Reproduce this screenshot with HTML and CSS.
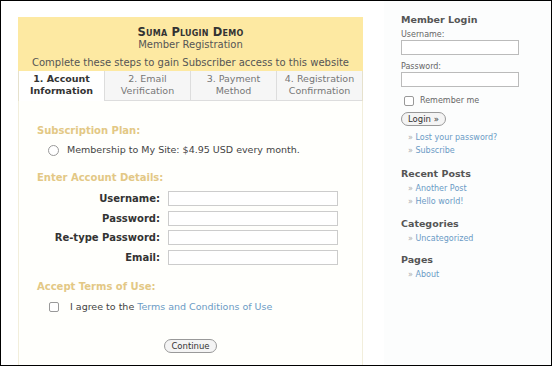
FILE: index.html
```html
<!DOCTYPE html>
<html lang="en">
<head>
<meta charset="UTF-8">
<title>Suma Plugin Demo - Member Registration</title>
<link rel="stylesheet" href="styles.css">
</head>
<body>
<div class="page">

<!-- Registration form -->
<div class="main">
    <div class="reg-header">
        <div class="reg-title">Suma Plugin Demo</div>
        <div class="reg-sub">Member Registration</div>
        <div class="reg-intro">Complete these steps to gain Subscriber access to this website</div>
    </div>

    <div class="steps">
        <div class="step active">1. Account<br>Information</div>
        <div class="step">2. Email<br>Verification</div>
        <div class="step">3. Payment<br>Method</div>
        <div class="step">4. Registration<br>Confirmation</div>
    </div>

    <form class="reg-body">
        <h3>Subscription Plan:</h3>
        <label class="option">
            <span class="radio"></span>
            Membership to My Site: $4.95 USD every month.
        </label>

        <h3>Enter Account Details:</h3>
        <div class="fields">
            <label for="user">Username:</label>
            <input type="text" id="user">
            <label for="pass">Password:</label>
            <input type="password" id="pass">
            <label for="pass2">Re-type Password:</label>
            <input type="password" id="pass2">
            <label for="email">Email:</label>
            <input type="text" id="email">
        </div>

        <h3>Accept Terms of Use:</h3>
        <label class="option agree">
            <span class="check"></span>
            I agree to the <a href="#">Terms and Conditions of Use</a>
        </label>

        <div class="actions">
            <button type="button" class="pill">Continue</button>
        </div>
    </form>
</div>

<!-- Sidebar widgets -->
<div class="sidebar">
    <h4 class="login-title">Member Login</h4>
    <label class="small">Username:</label>
    <input type="text" class="side-input">
    <label class="small">Password:</label>
    <input type="password" class="side-input">
    <label class="remember"><span class="check"></span>Remember me</label>
    <button type="button" class="pill login">Login &raquo;</button>
    <ul class="login-links">
        <li><a href="#">Lost your password?</a></li>
        <li><a href="#">Subscribe</a></li>
    </ul>

    <h4>Recent Posts</h4>
    <ul>
        <li><a href="#">Another Post</a></li>
        <li><a href="#">Hello world!</a></li>
    </ul>

    <h4>Categories</h4>
    <ul>
        <li><a href="#">Uncategorized</a></li>
    </ul>

    <h4>Pages</h4>
    <ul>
        <li><a href="#">About</a></li>
    </ul>
</div>

</div>
</body>
</html>
```

FILE: styles.css
```css
body {
    margin: 0;
    font-family: "DejaVu Sans", Verdana, sans-serif;
    color: #444;
    background: #fff;
}
.page {
    width: 552px;
    height: 366px;
    box-sizing: border-box;
    border: 1px solid #000;
    display: flex;
    overflow: hidden;
}

/* main column */
.main {
    width: 345px;
    margin: 16px 0 0 17px;
    display: flex;
    flex-direction: column;
}
.reg-header {
    background: #fde9a2;
    text-align: center;
    padding: 8px 0 1px;
    color: #333;
}
.reg-title {
    font-size: 11.5px;
    font-weight: bold;
    font-variant: small-caps;
    letter-spacing: 0.2px;
    line-height: 14px;
}
.reg-sub {
    font-size: 10px;
    line-height: 12px;
    color: #555;
}
.reg-intro {
    font-size: 10px;
    line-height: 14px;
    margin-top: 5px;
    color: #555;
}
.steps {
    display: flex;
    border-left: 1px solid #e6e1cc;
    border-right: 1px solid #e6e1cc;
}
.step {
    flex: 1;
    text-align: center;
    font-size: 9.5px;
    line-height: 12px;
    padding: 2px 0 3px;
    background: #f6f6f6;
    color: #777;
    border-bottom: 1px solid #ddd;
    border-left: 1px solid #ddd;
}
.step:first-child {
    border-left: 0;
}
.step.active {
    background: #fff;
    color: #333;
    font-weight: bold;
    border-bottom-color: #fff;
}
.reg-body {
    flex: 1;
    margin: 0;
    padding: 23px 0 0 18px;
    background: #fffffc;
    border-left: 1px solid #f2eedc;
    border-right: 1px solid #f2eedc;
    font-size: 9.5px;
}
.reg-body h3 {
    margin: 0;
    font-size: 10px;
    line-height: 14px;
    color: #e3c885;
}
.option {
    display: flex;
    align-items: center;
    margin: 6px 0 15px 11px;
    color: #444;
    line-height: 12px;
}
.radio {
    width: 9px;
    height: 9px;
    border: 1px solid #999;
    border-radius: 50%;
    margin-right: 8px;
    background: #fff;
}
.check {
    width: 8px;
    height: 8px;
    border: 1px solid #999;
    border-radius: 2px;
    background: #fff;
    display: inline-block;
}
.fields {
    display: grid;
    grid-template-columns: 123px 170px;
    column-gap: 8px;
    row-gap: 4.5px;
    margin: 6px 0 15px;
    align-items: center;
}
.fields label {
    text-align: right;
    font-weight: bold;
    font-size: 10px;
    color: #333;
}
.fields input {
    height: 15px;
    box-sizing: border-box;
    border: 1px solid #ccc;
    margin: 0;
    padding: 0 2px;
    background: #fff;
}
.agree {
    margin: 7px 0 0 12px;
}
.agree .check {
    margin-right: 11px;
}
.reg-body a {
    color: #6b9bc5;
    text-decoration: none;
    margin-left: 3px;
}
.actions {
    text-align: center;
    margin: 26px 18px 0 0;
}
.pill {
    font-family: "DejaVu Sans", Verdana, sans-serif;
    font-size: 8.5px;
    color: #333;
    background: #f4f4f4;
    border: 1px solid #999;
    border-radius: 8px;
    padding: 1px 6px;
    line-height: 10px;
}

/* sidebar */
.sidebar {
    flex: 1;
    margin-left: 21px;
    padding: 13px 0 0 17px;
    background: #fcfdfd;
    font-size: 8px;
}
.sidebar h4 {
    margin: 0 0 2px;
    font-size: 9.5px;
    line-height: 12px;
    color: #555;
}
.sidebar .login-title {
    margin-bottom: 4px;
}
.sidebar .small {
    display: block;
    color: #666;
    line-height: 10px;
}
.side-input {
    display: block;
    width: 118px;
    height: 15px;
    box-sizing: border-box;
    border: 1px solid #bbb;
    margin: 0 0 7px;
}
.remember {
    display: flex;
    align-items: center;
    gap: 6px;
    margin: 9px 0 6px 3px;
    color: #666;
    line-height: 10px;
}
.login {
    display: block;
    padding: 1px 6px;
}
.sidebar ul {
    list-style: none;
    margin: 0 0 9.5px 7px;
    padding: 0;
}
.sidebar .login-links {
    margin: 5px 0 11px 7px;
}
.sidebar li {
    line-height: 13px;
    color: #aaa;
}
.sidebar li::before {
    content: "\00bb\00a0";
    color: #aaa;
}
.sidebar a {
    color: #6b9bc5;
    text-decoration: none;
}
```
